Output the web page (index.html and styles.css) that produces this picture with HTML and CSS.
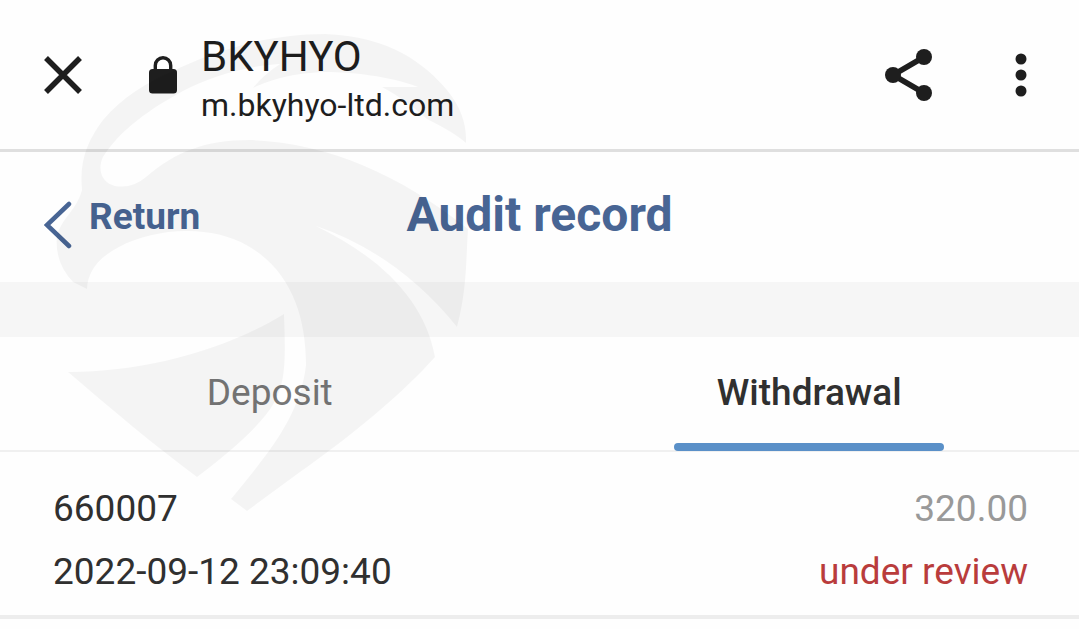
FILE: index.html
```html
<!DOCTYPE html>
<html lang="en">
<head>
    <meta charset="UTF-8">
    <meta name="viewport" content="width=device-width, initial-scale=1.0">
    <title>BKYHYO</title>
    <link rel="stylesheet" href="styles.css">
</head>
<body>
    <header class="browser-bar">
        <button type="button" class="icon-btn" aria-label="Close">
            <svg width="38" height="38" viewBox="0 0 38 38"><path d="M2 2 36 36M36 2 2 36" fill="none" stroke="#1e1e1e" stroke-width="5.5"/></svg>
        </button>
        <svg class="lock" width="30" height="38" viewBox="0 0 30 38">
            <path d="M7.3 15V9.5a7.7 7.7 0 0 1 15.4 0V15" fill="none" stroke="#1e1e1e" stroke-width="3.4"/>
            <rect x="1" y="13" width="28" height="24.500" rx="3.5" fill="#1e1e1e"/>
        </svg>
        <div class="site">
            <div class="site-name">BKYHYO</div>
            <div class="site-url">m.bkyhyo-ltd.com</div>
        </div>
        <button type="button" class="icon-btn" aria-label="Share">
            <svg width="48" height="54" viewBox="0 0 48 54" fill="#1e1e1e">
                <path d="M39 9 8 27l31 18" fill="none" stroke="#1e1e1e" stroke-width="5.5"/>
                <circle cx="39" cy="9" r="8"/>
                <circle cx="8" cy="27" r="8"/>
                <circle cx="39" cy="45" r="8"/>
            </svg>
        </button>
        <button type="button" class="icon-btn menu-btn" aria-label="Menu">
            <svg width="12" height="44" viewBox="0 0 12 44" fill="#1e1e1e">
                <circle cx="6" cy="6" r="5.5"/>
                <circle cx="6" cy="22" r="5.5"/>
                <circle cx="6" cy="38" r="5.5"/>
            </svg>
        </button>
    </header>

    <nav class="page-nav">
        <a href="#" class="return-link">
            <svg width="28" height="48" viewBox="0 0 28 48"><path d="M25 3 3 24l22 21" fill="none" stroke="#486594" stroke-width="4.5" stroke-linecap="round"/></svg>
            <span>Return</span>
        </a>
        <h1>Audit record</h1>
    </nav>

    <main>
        <div class="tabs" role="tablist">
            <button type="button" class="tab" role="tab" aria-selected="false">Deposit</button>
            <button type="button" class="tab active" role="tab" aria-selected="true">Withdrawal</button>
        </div>

        <div class="record">
            <div class="record-row">
                <span>660007</span>
                <span class="amount">320.00</span>
            </div>
            <div class="record-row">
                <span>2022-09-12 23:09:40</span>
                <span class="status">under review</span>
            </div>
        </div>
    </main>

    <!-- Eagle watermark over the whole page -->
    <svg class="watermark" width="480" height="520" viewBox="0 0 480 520" aria-hidden="true">
        <path d="M82 190C79 160 88 140 103 120C122 97 148 82 173 71C205 55 260 34 325 34C390 36 425 64 447 90C461 107 467 125 466 143C452 131 440 126 427 119C412 106 399 96 382 87H418C390 76 350 72 325 72C292 73 270 80 253 88Q263 75 280 64C245 66 210 77 183 91C150 109 120 130 103 157C97 170 102 183 115 186Q132 189 146 177C175 152 205 140 249 140C325 142 400 174 468 229C466 260 467 290 457 327C415 275 368 244 316 226C380 257 425 300 435 357L423 370C388 406 340 444 300 472L247 511L231 499C267 455 300 417 306 365C306 315 290 270 248 246C210 224 155 228 119 247Q88 263 87 289L73 282Q54 262 57 235C64 215 76 211 82 190Z"/>
        <path d="M68 372C145 372 225 350 284 314C286 365 285 383 274 403Q258 431 197 477C155 446 110 408 68 372Z"/>
    </svg>
</body>
</html>
```
FILE: styles.css
```css
:root {
    --blue: #486594;
    --dark: #303030;
    --ink: #1e1e1e;
    --line: #ededed;
}

* {
    box-sizing: border-box;
}

body {
    position: relative;
    margin: 0;
    font-family: Roboto, "Liberation Sans", sans-serif;
    font-size: 37px;
    color: var(--dark);
    background: #fefefe;
}

button {
    padding: 0;
    border: none;
    background: none;
    font: inherit;
    color: inherit;
}

svg {
    display: block;
}

.browser-bar {
    display: flex;
    align-items: center;
    height: 152px;
    padding: 0 52px 0 44px;
    border-bottom: 3px solid #dfdfdf;
    color: var(--ink);
}

.lock {
    margin-left: 66px;
}

.site {
    flex: 1;
    margin-left: 23px;
    padding-top: 12px;
}

.site-name {
    font-size: 42px;
    line-height: 48px;
}

.site-url {
    font-size: 32px;
    line-height: 48px;
}

.menu-btn {
    margin-left: 82px;
}

.page-nav {
    display: grid;
    grid-template-columns: 1fr auto 1fr;
    align-items: center;
    height: 130px;
    padding: 0 44px;
    color: var(--blue);
}

.page-nav h1 {
    margin: 0;
    font-size: 48px;
    line-height: 60px;
    font-weight: 700;
    padding-bottom: 4px;
}

.return-link {
    display: flex;
    gap: 17px;
    padding-top: 8px;
    color: inherit;
    font-weight: 700;
    line-height: 48px;
    text-decoration: none;
}

.return-link svg {
    margin-top: 8px;
}

.tabs {
    display: flex;
    border-top: 55px solid #f6f6f6;
    border-bottom: 2px solid #f0f0f0;
}

.tab {
    position: relative;
    flex: 1;
    height: 113px;
    padding-bottom: 2px;
    color: #777;
}

.tab.active {
    color: var(--dark);
    font-weight: 500;
}

.tab.active::after {
    content: "";
    position: absolute;
    left: 25%;
    bottom: -1px;
    width: 50%;
    height: 8px;
    border-radius: 4px;
    background: #5a90c8;
}

.record {
    padding: 25px 51px 12px 53px;
    border-bottom: 4px solid var(--line);
}

.record-row {
    display: flex;
    justify-content: space-between;
    line-height: 63px;
}

.amount {
    color: #999;
}

.status {
    color: #b93c3c;
}

.watermark {
    position: absolute;
    top: 0;
    left: 0;
    fill: rgba(0, 0, 0, 0.04);
    pointer-events: none;
}
```
